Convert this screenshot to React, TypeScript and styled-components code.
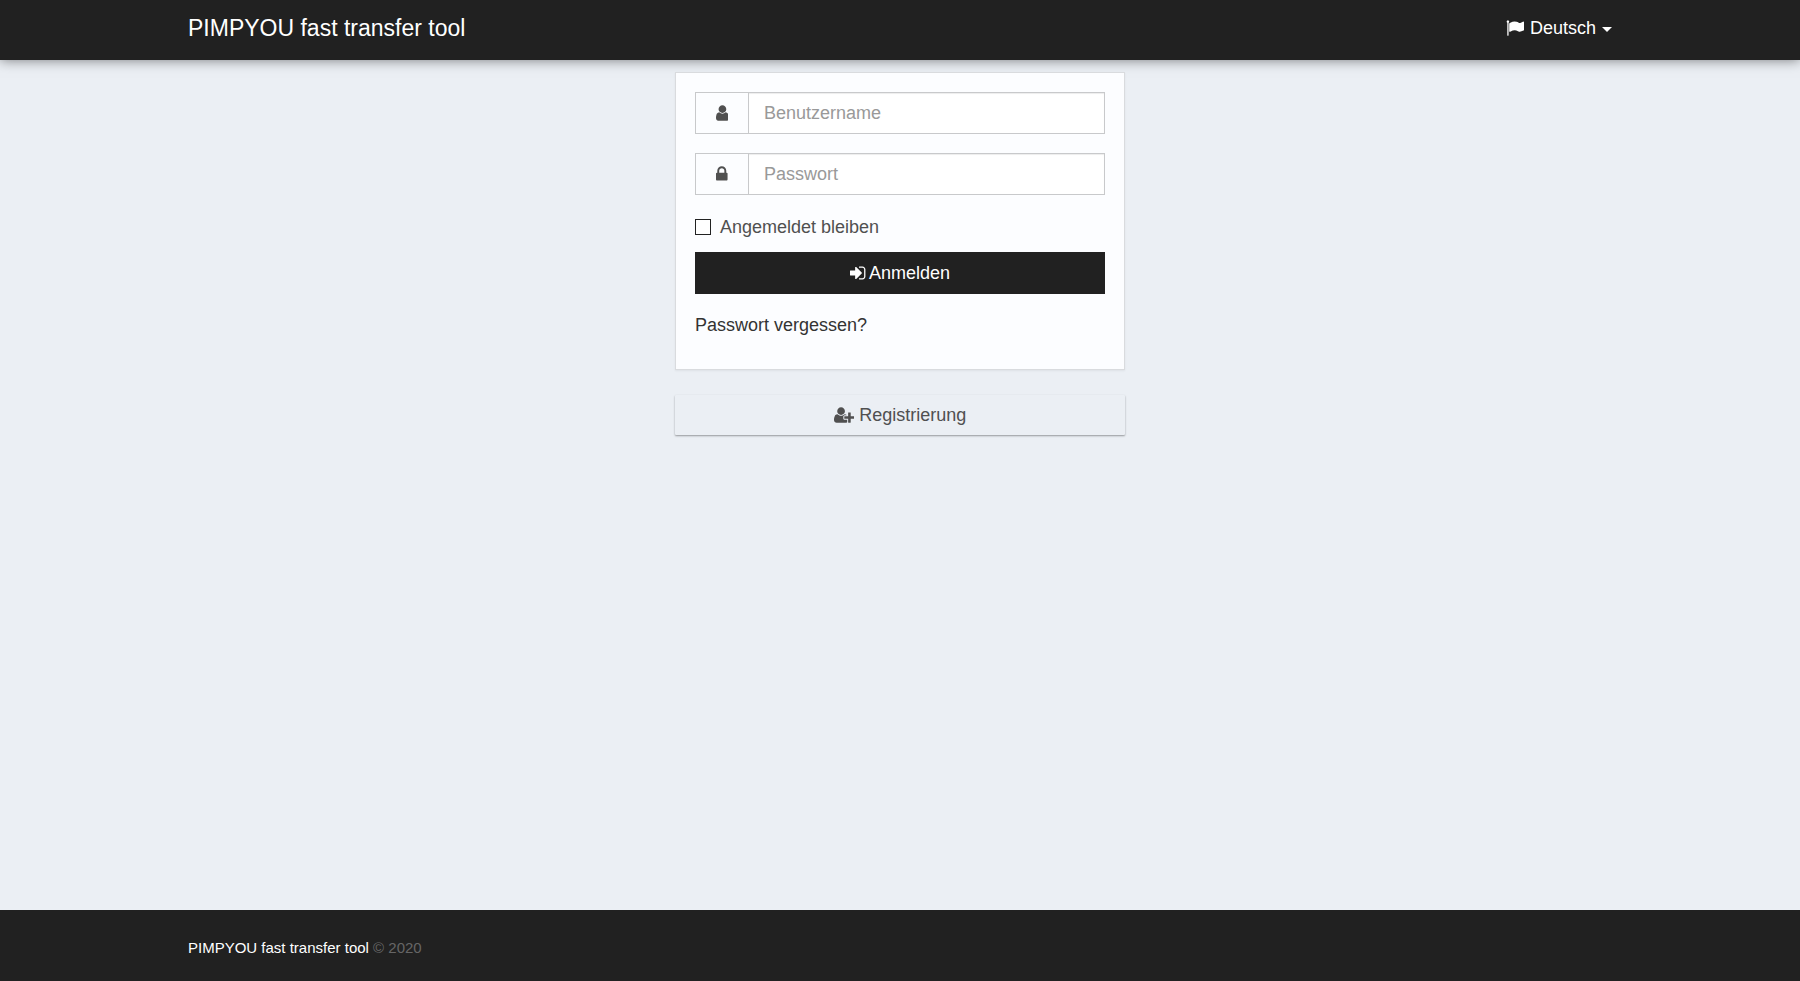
import React from "react";
import styled, { createGlobalStyle } from "styled-components";

const GlobalStyle = createGlobalStyle`
  *, *::before, *::after { box-sizing: border-box; }
  body {
    margin: 0;
    background: #ebeff4;
    color: #505050;
    font-family: "Liberation Sans", Arial, sans-serif;
    font-size: 18px;
    line-height: 24px;
  }
  a { text-decoration: none; }
  button, input { font: inherit; border-radius: 0; }
`;

const Page = styled.div`
  min-height: 100vh;
  display: flex;
  flex-direction: column;
`;

const Container = styled.div`
  width: 100%;
  max-width: 1462px;
  margin: 0 auto;
  padding: 0 19px;
`;

const Header = styled.header`
  background: #212121;
  height: 60px;
  box-shadow: 0 0 12px rgba(0, 0, 0, 0.5);
`;

const Navbar = styled(Container)`
  display: flex;
  align-items: center;
  justify-content: space-between;
  height: 56px;
`;

const Brand = styled.a`
  color: #fff;
  font-size: 23px;
`;

const LanguageButton = styled.button`
  display: flex;
  align-items: center;
  gap: 6px;
  padding: 0;
  border: 0;
  background: none;
  color: #fff;
  cursor: pointer;
`;

const Caret = styled.span`
  margin-top: 3px;
  border-top: 5px solid currentColor;
  border-left: 5px solid transparent;
  border-right: 5px solid transparent;
`;

const Main = styled.main`
  flex: 1;
  width: 100%;
  max-width: 450px;
  margin: 0 auto;
  padding: 12px 0 40px;
`;

const Card = styled.form`
  display: flex;
  flex-direction: column;
  background: #fcfdff;
  border: 1px solid #d9dbde;
  padding: 19px 19px 32px;
  box-shadow: 0 1px 2px rgba(0, 0, 0, 0.06);
`;

const InputGroup = styled.div`
  display: flex;
  height: 42px;
  margin-bottom: 19px;
  border: 1px solid #c8c9cb;
`;

const Addon = styled.label`
  display: flex;
  align-items: center;
  justify-content: center;
  width: 53px;
  border-right: 1px solid #c8c9cb;
`;

const TextInput = styled.input`
  flex: 1;
  min-width: 0;
  padding: 0 15px;
  border: 0;
  background: #fff;
  color: #505050;
  box-shadow: inset 0 1px 1px rgba(0, 0, 0, 0.075);
  &::placeholder { color: #999; opacity: 1; }
`;

const RememberLabel = styled.label`
  display: flex;
  align-items: center;
  gap: 9px;
  margin-bottom: 12px;
  line-height: 26px;
`;

const Checkbox = styled.input`
  appearance: none;
  width: 16px;
  height: 16px;
  margin: 0;
  border: 1px solid #222;
  background: #fff;
  &:checked { background: #222; box-shadow: inset 0 0 0 2px #fff; }
`;

const SubmitButton = styled.button`
  display: flex;
  align-items: center;
  justify-content: center;
  gap: 3px;
  height: 42px;
  border: 0;
  background: #212121;
  color: #fff;
  cursor: pointer;
`;

const ForgotLink = styled.a`
  align-self: flex-start;
  margin-top: 19px;
  color: #333;
`;

const RegisterLink = styled.a`
  display: flex;
  align-items: center;
  justify-content: center;
  gap: 5px;
  height: 40px;
  margin-top: 25px;
  border-radius: 1px;
  color: #505050;
  box-shadow: 0 1px 2px rgba(0, 0, 0, 0.37);
`;

const Footer = styled.footer`
  padding: 28px 0 23px;
  background: #212121;
  color: #666;
  font-size: 15px;
  line-height: 20px;
`;

const FooterLink = styled.a`
  color: #fff;
`;

const Glyph = styled.svg`
  height: 18px;
  fill: currentColor;
  flex: none;
`;

const icons = {
  flag: {
    box: "0 0 1792 1792",
    path: "M320 256q0 72-64 110v1266q0 13-9.5 22.5t-22.5 9.5h-64q-13 0-22.5-9.5t-9.5-22.5v-1266q-64-38-64-110 0-53 37.5-90.5t90.5-37.5 90.5 37.5 37.5 90.5zm1472 64v763q0 25-12.5 38.5t-39.5 27.5q-215 116-369 116-61 0-123.5-22t-108.5-48-115.5-48-142.5-22q-192 0-464 146-17 9-33 9-26 0-45-19t-19-45v-742q0-32 31-55 21-14 79-43 236-120 421-120 107 0 200 29t219 88q38 19 88 19 54 0 117.5-21t110-47 88-47 54.5-21q26 0 45 19t19 45z",
  },
  user: {
    box: "256 0 1280 1792",
    path: "M1536 1399q0 109-62.5 187t-150.5 78h-854q-88 0-150.5-78t-62.5-187q0-85 8.5-160.5t31.5-152 58.5-131 94-89 134.5-34.5q131 128 313 128t313-128q76 0 134.5 34.5t94 89 58.5 131 31.5 152 8.5 160.5zm-256-887q0 159-112.5 271.5t-271.5 112.5-271.5-112.5-112.5-271.5 112.5-271.5 271.5-112.5 271.5 112.5 112.5 271.5z",
  },
  lock: {
    box: "320 0 1152 1792",
    path: "M640 768h512v-192q0-106-75-181t-181-75-181 75-75 181v192zm832 96v576q0 40-28 68t-68 28h-960q-40 0-68-28t-28-68v-576q0-40 28-68t68-28h32v-192q0-184 132-316t316-132 316 132 132 316v192h32q40 0 68 28t28 68z",
  },
  signIn: {
    box: "128 0 1600 1792",
    path: "M1312 896q0 26-19 45l-544 544q-19 19-45 19t-45-19-19-45v-288h-448q-26 0-45-19t-19-45v-384q0-26 19-45t45-19h448v-288q0-26 19-45t45-19 45 19l544 544q19 19 19 45zm352-352v704q0 119-84.5 203.5t-203.5 84.5h-320q-13 0-22.5-9.5t-9.5-22.5q0-4-1-20t-.5-26.5 3-23.5 10-19.5 20.5-6.5h320q66 0 113-47t47-113v-704q0-66-47-113t-113-47h-312l-11.5-1-11.5-3-8-5.5-7-9-2-13.5q0-4-1-20t-.5-26.5 3-23.5 10-19.5 20.5-6.5h320q119 0 203.5 84.5t84.5 203.5z",
  },
  userPlus: {
    box: "0 0 2048 1792",
    path: "M704 896q-159 0-271.5-112.5t-112.5-271.5 112.5-271.5 271.5-112.5 271.5 112.5 112.5 271.5-112.5 271.5-271.5 112.5zm960 128h352q13 0 22.5 9.5t9.5 22.5v192q0 13-9.5 22.5t-22.5 9.5h-352v352q0 13-9.5 22.5t-22.5 9.5h-192q-13 0-22.5-9.5t-9.5-22.5v-352h-352q-13 0-22.5-9.5t-9.5-22.5v-192q0-13 9.5-22.5t22.5-9.5h352v-352q0-13 9.5-22.5t22.5-9.5h192q13 0 22.5 9.5t9.5 22.5v352zm-736 224q0 52 38 90t90 38h256v238q-68 50-171 50h-874q-121 0-194-69t-73-190q0-53 3.5-103.5t14-109 26.5-108.5 43-97.5 62-81 85.5-53.5 111.5-20q19 0 39 17 79 61 154.5 91.5t164.5 30.5 164.5-30.5 154.5-91.5q20-17 39-17 132 0 217 96h-223q-52 0-90 38t-38 90v192z",
  },
};

function Icon({ name }: { name: keyof typeof icons }) {
  return (
    <Glyph viewBox={icons[name].box} aria-hidden="true">
      <path d={icons[name].path} />
    </Glyph>
  );
}

export default function App() {
  return (
    <Page>
      <GlobalStyle />
      <Header>
        <Navbar>
          <Brand href="#">PIMPYOU fast transfer tool</Brand>
          <LanguageButton type="button" aria-haspopup="menu">
            <Icon name="flag" />
            Deutsch
            <Caret />
          </LanguageButton>
        </Navbar>
      </Header>
      <Main>
        <Card onSubmit={(event) => event.preventDefault()}>
          <InputGroup>
            <Addon htmlFor="username" aria-label="Benutzername">
              <Icon name="user" />
            </Addon>
            <TextInput id="username" type="text" placeholder="Benutzername" />
          </InputGroup>
          <InputGroup>
            <Addon htmlFor="password" aria-label="Passwort">
              <Icon name="lock" />
            </Addon>
            <TextInput id="password" type="password" placeholder="Passwort" />
          </InputGroup>
          <RememberLabel htmlFor="remember">
            <Checkbox id="remember" type="checkbox" />
            Angemeldet bleiben
          </RememberLabel>
          <SubmitButton type="submit">
            <Icon name="signIn" />
            Anmelden
          </SubmitButton>
          <ForgotLink href="#">Passwort vergessen?</ForgotLink>
        </Card>
        <RegisterLink href="#">
          <Icon name="userPlus" />
          Registrierung
        </RegisterLink>
      </Main>
      <Footer>
        <Container>
          <FooterLink href="#">PIMPYOU fast transfer tool</FooterLink> © 2020
        </Container>
      </Footer>
    </Page>
  );
}
